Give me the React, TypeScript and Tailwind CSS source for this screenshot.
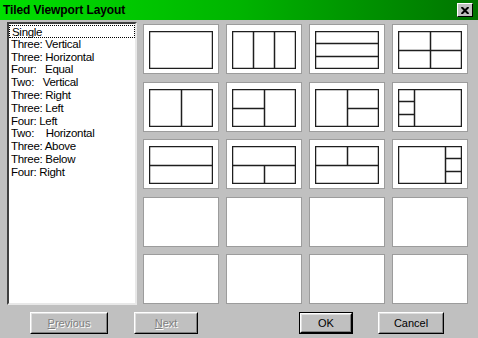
type Seg = [number, number, number, number];

const third = 1 / 3;
const twoThirds = 2 / 3;

const layouts: Seg[][] = [
    [],
    [[third, 0, third, 1], [twoThirds, 0, twoThirds, 1]],
    [[0, third, 1, third], [0, twoThirds, 1, twoThirds]],
    [[0.5, 0, 0.5, 1], [0, 0.5, 1, 0.5]],
    [[0.5, 0, 0.5, 1]],
    [[0.5, 0, 0.5, 1], [0, 0.5, 0.5, 0.5]],
    [[0.5, 0, 0.5, 1], [0.5, 0.5, 1, 0.5]],
    [[0.25, 0, 0.25, 1], [0, third, 0.25, third], [0, twoThirds, 0.25, twoThirds]],
    [[0, 0.5, 1, 0.5]],
    [[0, 0.5, 1, 0.5], [0.5, 0.5, 0.5, 1]],
    [[0, 0.5, 1, 0.5], [0.5, 0, 0.5, 0.5]],
    [[0.75, 0, 0.75, 1], [0.75, third, 1, third], [0.75, twoThirds, 1, twoThirds]],
];

const items = [
    "Single",
    "Three: Vertical",
    "Three: Horizontal",
    "Four:   Equal",
    "Two:   Vertical",
    "Three: Right",
    "Three: Left",
    "Four: Left",
    "Two:    Horizontal",
    "Three: Above",
    "Three: Below",
    "Four: Right",
];

function Diagram({ segs }: { segs: Seg[] }) {
    const W = 63;
    const H = 37;
    const px = (f: number, size: number) => Math.round(f * size) + 0.5;
    return (
        <svg width="64" height="38" className="block">
            <rect x="0.5" y="0.5" width={W} height={H} fill="none" stroke="#1e1e1e" strokeWidth="1.5" />
            {segs.map(([x1, y1, x2, y2], i) => (
                <line
                    key={i}
                    x1={px(x1, W)}
                    y1={px(y1, H)}
                    x2={px(x2, W)}
                    y2={px(y2, H)}
                    stroke="#1e1e1e"
                    strokeWidth="1.5"
                />
            ))}
        </svg>
    );
}

function Tile({ segs }: { segs?: Seg[] }) {
    return (
        <div className="w-[76px] h-[50px] bg-white border border-[#9c9c9c]">
            {segs && (
                <div className="ml-[5px] mt-[6px]">
                    <Diagram segs={segs} />
                </div>
            )}
        </div>
    );
}

function Button({
    label,
    underline,
    width,
    disabled,
    isDefault,
    className,
}: {
    label: string;
    underline?: boolean;
    width: string;
    disabled?: boolean;
    isDefault?: boolean;
    className?: string;
}) {
    const first = underline ? label[0] : "";
    const rest = underline ? label.slice(1) : label;
    return (
        <div
            className={`${width} h-[22px] ${className ?? ""} ${
                isDefault ? "border border-black" : ""
            }`}
        >
            <div className="h-full border border-t-white border-l-white border-r-black border-b-black">
                <div className="h-full flex items-center justify-center border border-t-[#dfdfdf] border-l-[#dfdfdf] border-r-[#808080] border-b-[#808080] text-[11px]">
                    {disabled ? (
                        <span className="text-[#808080] [text-shadow:1px_1px_0_#ffffff]">
                            <span className="underline">{first}</span>
                            {rest}
                        </span>
                    ) : (
                        <span className="text-black">{label}</span>
                    )}
                </div>
            </div>
        </div>
    );
}

export default function App() {
    return (
        <div className="w-[478px] h-[338px] bg-[#c0c0c0] flex flex-col font-['Liberation_Sans',Arial,sans-serif] overflow-hidden">
            <div className="h-[20px] flex items-center bg-linear-to-r from-[#00e000] via-[#00b400] to-[#007400]">
                <span className="pl-[3px] text-[12px] font-bold text-black tracking-[-0.1px]">
                    Tiled Viewport Layout
                </span>
                <div className="ml-auto mr-[5px] w-[16px] h-[14px] bg-[#c0c0c0] border border-t-white border-l-white border-r-black border-b-black flex items-center justify-center">
                    <svg width="8" height="7" viewBox="0 0 8 7">
                        <path d="M0.5 0 L7.5 7 M7.5 0 L0.5 7" stroke="#000" strokeWidth="2" />
                    </svg>
                </div>
            </div>
            <div className="flex pt-[2px]">
                <div className="ml-[7px] w-[130px] h-[283px] bg-white border-2 border-t-[#404040] border-l-[#404040] border-r-[#e8e8e8] border-b-[#e8e8e8] pt-[1px]">
                    {items.map((it, i) => (
                        <div
                            key={it}
                            className={`h-[12.8px] leading-[12.8px] pl-[2px] text-[11.5px] tracking-[-0.3px] text-black whitespace-pre ${
                                i === 0 ? "border border-dotted border-black pl-[1px] leading-[10.8px]" : ""
                            }`}
                        >
                            {it}
                        </div>
                    ))}
                </div>
                <div className="ml-[6px] mt-[2px] grid grid-cols-[repeat(4,76px)] auto-rows-[50px] gap-x-[7px] gap-y-[7.5px]">
                    {layouts.map((segs, i) => (
                        <Tile key={i} segs={segs} />
                    ))}
                    {Array.from({ length: 8 }).map((_, i) => (
                        <Tile key={"e" + i} />
                    ))}
                </div>
            </div>
            <div className="flex mt-[7px]">
                <Button label="Previous" underline disabled width="w-[78px]" className="ml-[30px]" />
                <Button label="Next" underline disabled width="w-[64px]" className="ml-[26px]" />
                <Button label="OK" isDefault width="w-[54px]" className="ml-[101px]" />
                <Button label="Cancel" width="w-[66px]" className="ml-[25px]" />
            </div>
        </div>
    );
}
